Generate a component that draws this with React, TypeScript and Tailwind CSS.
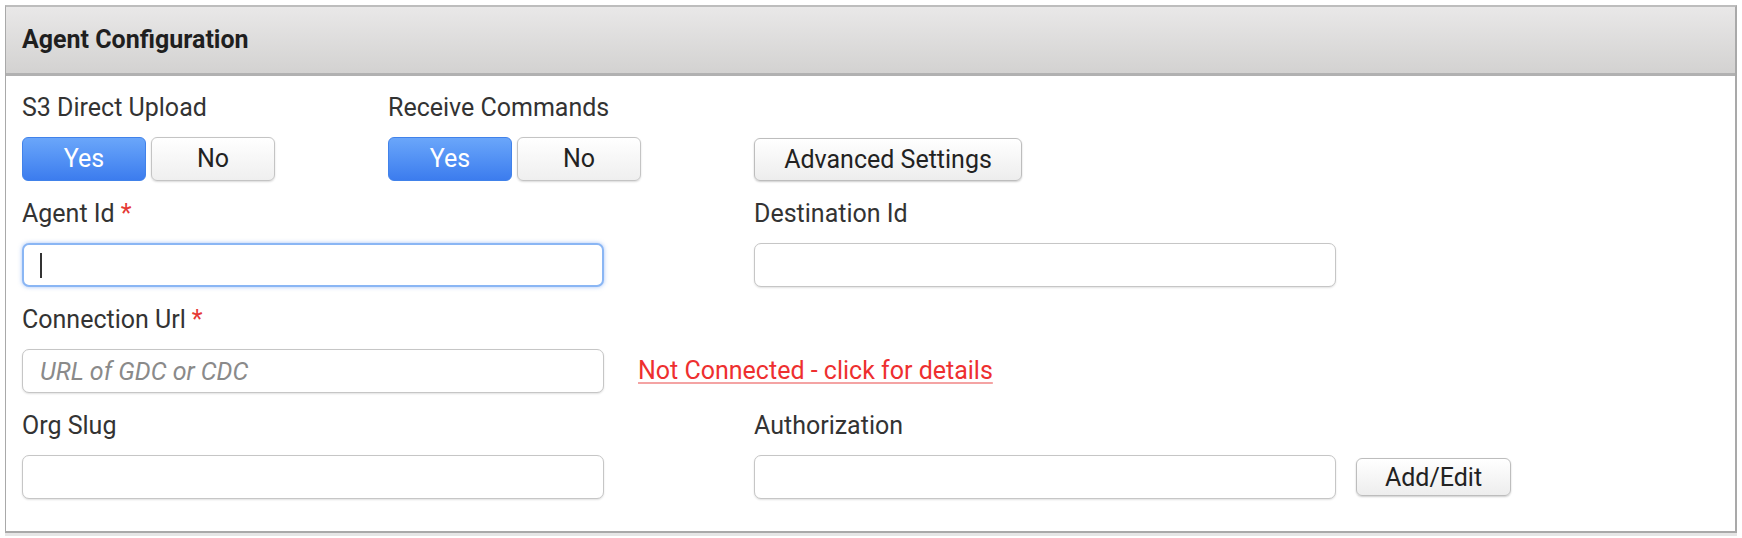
import { useState } from 'react'

function Toggle({ value, onChange }: { value: boolean; onChange: (v: boolean) => void }) {
    const on = 'bg-gradient-to-b from-[#6aa6fa] to-[#3c7cee] border-[#4182ea] text-white'
    const off = 'bg-gradient-to-b from-white to-[#efefef] border-[#c4c4c4] text-[#222] shadow-[0_1px_2px_rgba(0,0,0,0.15)]'
    return (
        <div className="flex gap-[5px]">
            <button
                onClick={() => onChange(true)}
                className={`w-[124px] h-[44px] rounded-[6px] border text-[25px] ${value ? on : off}`}
            >
                Yes
            </button>
            <button
                onClick={() => onChange(false)}
                className={`w-[124px] h-[44px] rounded-[6px] border text-[25px] ${!value ? on : off}`}
            >
                No
            </button>
        </div>
    )
}

function Label({ text, required }: { text: string; required?: boolean }) {
    return (
        <div className="h-[29px] leading-[29px] text-[25px] text-[#333] mb-[15px] whitespace-nowrap">
            {text}
            {required && <span className="text-[#e53935] ml-[6px]">*</span>}
        </div>
    )
}

function TextInput({ placeholder, focused }: { placeholder?: string; focused?: boolean }) {
    return (
        <div className="relative">
            <input
                placeholder={placeholder}
                className={`h-[44px] w-[582px] rounded-[7px] bg-white px-[17px] text-[25px] text-[#333] outline-none placeholder:italic placeholder:text-[#8a8a8a] ${
                    focused
                        ? 'border-2 border-[#8ab6f4] shadow-[0_0_4px_rgba(80,140,240,0.5)]'
                        : 'border border-[#c6c6c6] shadow-[0_1px_2px_rgba(0,0,0,0.12)]'
                }`}
            />
            {/* text caret of the focused field */}
            {focused && <span className="absolute left-[18px] top-[10px] h-[25px] w-[2px] bg-[#333]" />}
        </div>
    )
}

export default function App() {
    const [s3, setS3] = useState(true)
    const [cmds, setCmds] = useState(true)

    return (
        <div className="w-[1742px] h-[538px] bg-white pt-[5px] px-[5px] font-['Roboto',sans-serif]">
            <div className="h-[528px] border border-[#a9a9a9] border-t-[2px] border-t-[#bdbdbd] border-r-[2px] border-b-[2px] shadow-[0_3px_0_#e6e6e6] flex flex-col">
                {/* Header */}
                <div className="h-[69px] shrink-0 bg-gradient-to-b from-[#e9e8e8] to-[#d3d2d1] border-b-[3px] border-[#b1b1b1] flex items-center pl-[16px]">
                    <h2 className="text-[25px] font-bold text-[#1f1f1f]">Agent Configuration</h2>
                </div>

                {/* Body */}
                <div className="pt-[17px] pl-[16px] flex flex-col gap-[18px]">
                    <div className="flex">
                        <div className="w-[366px]">
                            <Label text="S3 Direct Upload" />
                            <Toggle value={s3} onChange={setS3} />
                        </div>
                        <div className="w-[366px]">
                            <Label text="Receive Commands" />
                            <Toggle value={cmds} onChange={setCmds} />
                        </div>
                        <div className="pt-[45px]">
                            <button className="h-[43px] w-[268px] rounded-[6px] border border-[#bdbdbd] bg-gradient-to-b from-white to-[#ededed] text-[25px] text-[#222] shadow-[0_1px_2px_rgba(0,0,0,0.2)]">
                                Advanced Settings
                            </button>
                        </div>
                    </div>

                    <div className="flex">
                        <div className="w-[732px]">
                            <Label text="Agent Id" required />
                            <TextInput focused />
                        </div>
                        <div>
                            <Label text="Destination Id" />
                            <TextInput />
                        </div>
                    </div>

                    <div className="flex flex-col">
                        <Label text="Connection Url" required />
                        <div className="flex items-center gap-[34px]">
                            <TextInput placeholder="URL of GDC or CDC" />
                            <a
                                href="#"
                                className="text-[25px] text-[#ee2f2f] underline decoration-[color:#f4a3a3] decoration-2 underline-offset-[3px]"
                            >
                                Not Connected - click for details
                            </a>
                        </div>
                    </div>

                    <div className="flex">
                        <div className="w-[732px]">
                            <Label text="Org Slug" />
                            <TextInput />
                        </div>
                        <div>
                            <Label text="Authorization" />
                            <div className="flex items-center gap-[20px]">
                                <TextInput />
                                <button className="h-[38px] w-[155px] rounded-[6px] border border-[#bdbdbd] bg-gradient-to-b from-white to-[#ededed] text-[25px] text-[#222] shadow-[0_1px_2px_rgba(0,0,0,0.2)]">
                                    Add/Edit
                                </button>
                            </div>
                        </div>
                    </div>
                </div>
            </div>
        </div>
    )
}
